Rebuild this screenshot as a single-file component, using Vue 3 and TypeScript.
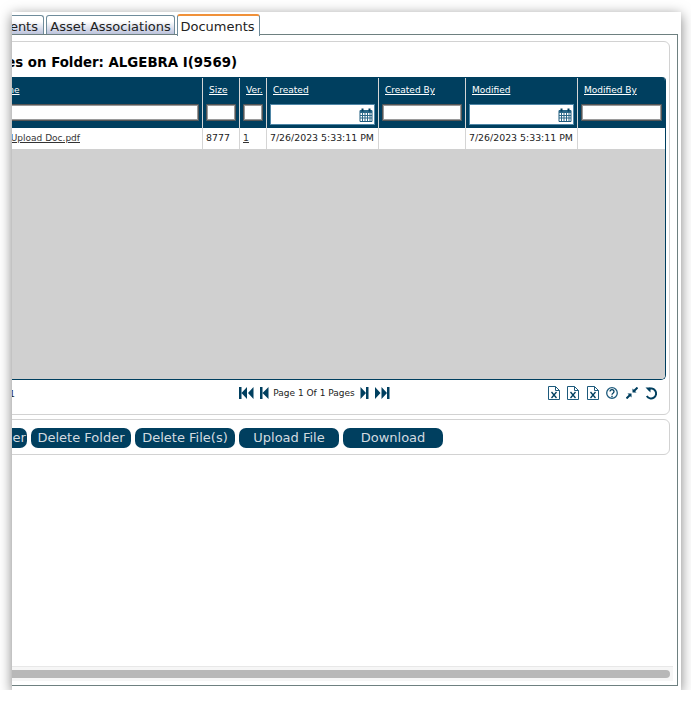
<script setup lang="ts">
const tabs = [
  { label: 'Contents', key: 'first', active: false },
  { label: 'Asset Associations', key: 'assets', active: false },
  { label: 'Documents', key: 'docs', active: true },
]
const columns = [
  { label: 'Name', key: 'name', date: false, value: 'Test Upload Doc.pdf', link: true },
  { label: 'Size', key: 'size', date: false, value: '8777', link: false },
  { label: 'Ver.', key: 'ver', date: false, value: '1', link: true },
  { label: 'Created', key: 'created', date: true, value: '7/26/2023 5:33:11 PM', link: false },
  { label: 'Created By', key: 'createdby', date: false, value: '', link: false },
  { label: 'Modified', key: 'modified', date: true, value: '7/26/2023 5:33:11 PM', link: false },
  { label: 'Modified By', key: 'modifiedby', date: false, value: '', link: false },
]
const buttons = ['Rename Folder', 'Delete Folder', 'Delete File(s)', 'Upload File', 'Download']
</script>

<template>
  <div class="window">
    <div class="canvas">
      <div class="tabs">
        <div v-for="t in tabs" :key="t.key" class="tab" :class="[t.key, { active: t.active }]">{{ t.label }}</div>
      </div>
      <div class="panel">
        <section class="card">
          <h2 class="title">Files on Folder: ALGEBRA I(9569)</h2>
          <div class="grid">
            <div class="head">
              <div v-for="c in columns" :key="c.key" class="hcell">
                <a class="hlabel">{{ c.label }}</a>
                <div v-if="c.date" class="datebox">
                  <svg class="cal" viewBox="0 0 14 14" width="14" height="14">
                    <path d="M1 2.500h12v11H1z" fill="#fff" stroke="#1d5a7c" />
                    <path d="M1 2h12v3H1z" fill="#2a6787" />
                    <path d="M3.500 .5v3M10.500 .5v3" stroke="#003f5f" stroke-width="2" />
                    <path d="M3.500 5v8M6 5v8M8.500 5v8M11 5v8M1 7.500h12M1 10h12" stroke="#2a6787" stroke-width="1" />
                  </svg>
                </div>
                <div v-else class="textbox"></div>
              </div>
            </div>
            <div class="row">
              <div v-for="c in columns" :key="c.key" class="cell">
                <a v-if="c.link" class="cell-link">{{ c.value }}</a>
                <template v-else>{{ c.value }}</template>
              </div>
            </div>
            <div class="empty"></div>
          </div>
          <div class="pager">
            <span class="records">Records 1 - 1 of 1</span>
            <div class="nav">
              <svg viewBox="0 0 15 12" width="15" height="12"><path d="M0 0h2.500v12H0zM8 0v12L2.500 6zM14.500 0v12L9 6z" fill="#003f5f" /></svg>
              <svg class="prev" viewBox="0 0 9 12" width="9" height="12"><path d="M0 0h2.500v12H0zM8.500 0v12L2.500 6z" fill="#003f5f" /></svg>
              <span class="pageinfo">Page 1 Of 1 Pages</span>
              <svg class="next" viewBox="0 0 9 12" width="9" height="12"><path d="M8.500 0H6v12h2.500zM.5 0v12L6 6z" fill="#003f5f" /></svg>
              <svg viewBox="0 0 15 12" width="15" height="12"><path d="M14.500 0H12v12h2.500zM6.500 0v12L12 6zM0 0v12l5.500-6z" fill="#003f5f" /></svg>
            </div>
            <div class="tools">
              <svg v-for="n in 3" :key="n" viewBox="0 0 12 14" width="12" height="14">
                <path d="M.5 .5h7l4 4v9h-11z M7.500 .5v4h4" fill="#fff" stroke="#1d5a7c" />
                <path d="M3.500 6l5 6M8.500 6l-5 6" stroke="#003f5f" stroke-width="1.300" fill="none" />
              </svg>
              <svg viewBox="0 0 12 14" width="12" height="14">
                <circle cx="6" cy="7" r="5.300" fill="none" stroke="#1d5a7c" stroke-width="1.300" />
                <path d="M4 5.500a2 1.900 0 1 1 3 1.700c-.7.4-1 .8-1 1.500" fill="none" stroke="#003f5f" stroke-width="1.300" />
                <path d="M5.300 9.800h1.400v1.400h-1.400z" fill="#003f5f" />
              </svg>
              <svg viewBox="0 0 12 12" width="12" height="12">
                <path d="M11.500 .5L7.500 4.500M.5 11.500l4-4" stroke="#003f5f" stroke-width="2" />
                <path d="M6.500 1.500v4h4zM5.500 10.500v-4h-4z" fill="#003f5f" />
              </svg>
              <svg viewBox="0 0 13 13" width="13" height="13">
                <path d="M3 2.600a5 5 0 1 1 -1.200 6.400" fill="none" stroke="#003f5f" stroke-width="2" />
                <path d="M.5 .5h5v5z" fill="#003f5f" />
              </svg>
            </div>
          </div>
        </section>
        <section class="card actions">
          <button v-for="b in buttons" :key="b" class="btn" type="button">{{ b }}</button>
        </section>
        <div class="hscroll"><div class="thumb"></div></div>
      </div>
    </div>
  </div>
</template>

<style>
html, body { margin: 0; background: #fff; overflow: hidden; }
</style>

<style scoped>
.window {
  margin: 12px 0 0 12px;
  width: 669px;
  height: 678px;
  background: #fff;
  overflow: hidden;
  box-shadow: 0 3px 12px rgba(0, 0, 0, .5);
  font-family: "DejaVu Sans", Verdana, sans-serif;
  color: #111;
}
.canvas {
  margin-left: -100px;
  width: 766px;
  height: 674px;
  display: flex;
  flex-direction: column;
}
.tabs {
  display: flex;
  align-items: flex-start;
  gap: 2px;
  padding: 2px 0 0 48px;
  height: 20px;
  position: relative;
  z-index: 1;
}
.tab {
  box-sizing: border-box;
  height: 19px;
  margin-top: 1px;
  border: 1px solid #6f8c9b;
  border-bottom: 0;
  border-radius: 3px 3px 0 0;
  background: linear-gradient(#fff 30%, #bcc3dc);
  font-size: 13px;
  line-height: 22px;
  text-align: center;
  white-space: nowrap;
  color: #222;
  overflow: hidden;
}
.tab.first { width: 84px; text-align: right; padding-right: 5px; }
.tab.assets { width: 129px; }
.tab.docs { width: 83px; padding-right: 2px; }
.tab.active {
  height: 22px;
  margin-top: 0;
  background: #fff;
  border-top: 2px solid #f0913a;
  line-height: 21px;
}
.panel {
  box-sizing: border-box;
  flex: 1;
  border: 1px solid #6e8080;
  padding: 6px 7px 4px;
  display: flex;
  flex-direction: column;
  gap: 4px;
}
.card {
  box-sizing: border-box;
  height: 374px;
  border: 1px solid #d2d2d2;
  border-radius: 6px;
  padding: 0 3px;
  display: flex;
  flex-direction: column;
}
.title {
  margin: 0;
  height: 35px;
  padding: 12px 0 0 64px;
  box-sizing: border-box;
  font-size: 13.33px;
  line-height: 18px;
  font-weight: 700;
  color: #000;
  white-space: nowrap;
}
.grid {
  height: 302px;
  display: flex;
  flex-direction: column;
  border-right: 1px solid #003f5f;
  border-bottom: 1px solid #003f5f;
  border-radius: 0 4px 5px 5px;
  overflow: hidden;
}
.head, .row {
  display: grid;
  grid-template-columns: 279px 37px 27px 112px 87px 112px 87px;
}
.head {
  height: 51px;
  background: #003f5f;
}
.hcell {
  box-sizing: border-box;
  border-right: 1px solid #d5d5d5;
  padding: 0 3px;
  margin-top: 1px;
  display: flex;
  flex-direction: column;
}
.hcell:last-child { border-right: 0; }
.hlabel {
  height: 26px;
  padding-left: 3px;
  font-size: 9px;
  line-height: 24px;
  color: #fff;
  text-decoration: underline;
  white-space: nowrap;
}
.hcell:first-child .hlabel { padding-left: 66px; }
.textbox {
  box-sizing: border-box;
  height: 17px;
  background: #fff;
  border: 1px solid #555;
  border-radius: 1px;
  box-shadow: inset 0 0 0 1px #9a9a9a;
}
.datebox {
  box-sizing: border-box;
  height: 21px;
  background: #fff;
  border: 1px solid #4f86a6;
  display: flex;
  align-items: center;
  justify-content: flex-end;
  padding: 0 1px 0 0;
}
.row { height: 21px; background: #fff; }
.cell {
  box-sizing: border-box;
  border-right: 1px solid #d5d5d5;
  padding-left: 3px;
  font-size: 9.4px;
  line-height: 20px;
  color: #222;
  white-space: nowrap;
  overflow: hidden;
}
.cell:first-child { font-size: 9px; text-align: right; padding-right: 122px; }
.cell:last-child { border-right: 0; }
.cell-link { text-decoration: underline; color: #333; }
.empty { flex: 1; background: #d0d0d0; }
.pager {
  flex: 1;
  position: relative;
  display: flex;
  align-items: center;
  justify-content: center;
  padding-bottom: 9px;
  font-size: 9px;
}
.records {
  position: absolute;
  left: 0;
  top: 9px;
  width: 91px;
  text-align: right;
  line-height: 11px;
  color: #222;
  white-space: nowrap;
}
.nav {
  display: flex;
  align-items: center;
  margin-left: 39px;
}
.prev { margin-left: 6px; }
.next { margin-right: 6px; }
.pageinfo { margin: 0 5px 0 4px; color: #222; white-space: nowrap; }
.tools {
  position: absolute;
  right: 8px;
  top: 6px;
  display: flex;
  align-items: center;
  gap: 7.500px;
}
.actions {
  height: 36px;
  flex-direction: row;
  align-items: center;
  gap: 4px;
  padding: 1px 6px 0;
}
.btn {
  flex: none;
  width: 100px;
  height: 20px;
  padding: 0;
  border: 0;
  border-radius: 7px;
  background: #003f5f;
  color: #d3dbe0;
  font-family: inherit;
  font-size: 13px;
  line-height: 20px;
  white-space: nowrap;
}
.hscroll {
  box-sizing: border-box;
  height: 15px;
  margin: auto -3px 0 -7px;
  border-top: 1px solid #e8e8e8;
  background: #f6f6f6;
  padding: 3px 3px 3px 0;
}
.thumb {
  height: 8px;
  border-radius: 4px;
  background: #b8b8b8;
}
</style>
